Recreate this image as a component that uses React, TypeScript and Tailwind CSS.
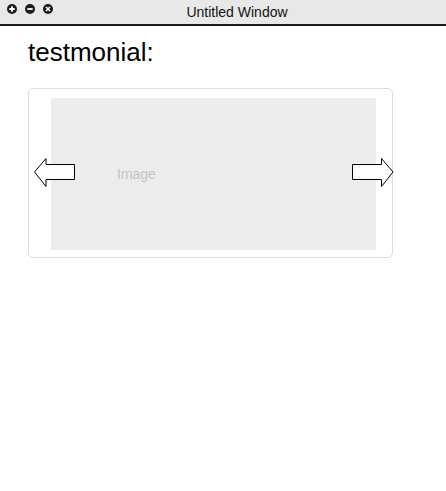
import { ReactNode } from "react";

function WinButton({ children }: { children: ReactNode }) {
  return (
    <svg width="10" height="10" viewBox="0 0 10 10" className="block">
      <circle cx="5" cy="5" r="5" fill="#1c1c1c" />
      {children}
    </svg>
  );
}

function TitleBar() {
  return (
    <div className="relative h-[26px] bg-[#e8e8e8] border-b-2 border-[#1a1a1a] flex items-center justify-center pl-[28px]">
      <div className="absolute left-[7px] top-[4px] flex gap-[8px]">
        <WinButton>
          <path d="M5 2.3V7.7M2.3 5H7.7" stroke="#fff" strokeWidth="1.8" />
        </WinButton>
        <WinButton>
          <path d="M2.3 5H7.7" stroke="#fff" strokeWidth="1.8" />
        </WinButton>
        <WinButton>
          <path d="M3 3L7 7M7 3L3 7" stroke="#fff" strokeWidth="1.6" />
        </WinButton>
      </div>
      <span className="text-[14px] leading-[24px] text-[#111]">Untitled Window</span>
    </div>
  );
}

function Arrow({ dir }: { dir: "left" | "right" }) {
  const points =
    dir === "left"
      ? "0.5,14 12,0.5 12,6.5 40.5,6.5 40.5,21.5 12,21.5 12,28.5"
      : "41,14 29.5,0.5 29.5,6.5 0.5,6.5 0.5,21.5 29.5,21.5 29.5,28.5";
  return (
    <svg width="42" height="29" viewBox="0 0 42 29" className="block">
      <polygon points={points} fill="#fff" stroke="#000" strokeWidth="1" />
    </svg>
  );
}

function Slider() {
  return (
    <div className="relative w-[365px] h-[170px] border border-[#dcdcdc] rounded-[5px] pl-[22px] pt-[9px]">
      <div className="w-[325px] h-[152px] bg-[#ececec] flex items-center pl-[66px]">
        <span className="text-[14px] text-[#cbc1bb]">Image</span>
      </div>
      <div className="absolute left-[5px] top-[69px]">
        <Arrow dir="left" />
      </div>
      <div className="absolute left-[323px] top-[69px]">
        <Arrow dir="right" />
      </div>
    </div>
  );
}

export default function App() {
  return (
    <div
      className="w-[446px] h-[491px] bg-white overflow-hidden"
      style={{ fontFamily: '"Liberation Sans", Arial, sans-serif' }}
    >
      <TitleBar />
      <div className="pl-[28px] pt-[11px]">
        <h1 className="text-[26px] leading-[30px] text-black">testmonial:</h1>
        <div className="mt-[21px]">
          <Slider />
        </div>
      </div>
    </div>
  );
}
